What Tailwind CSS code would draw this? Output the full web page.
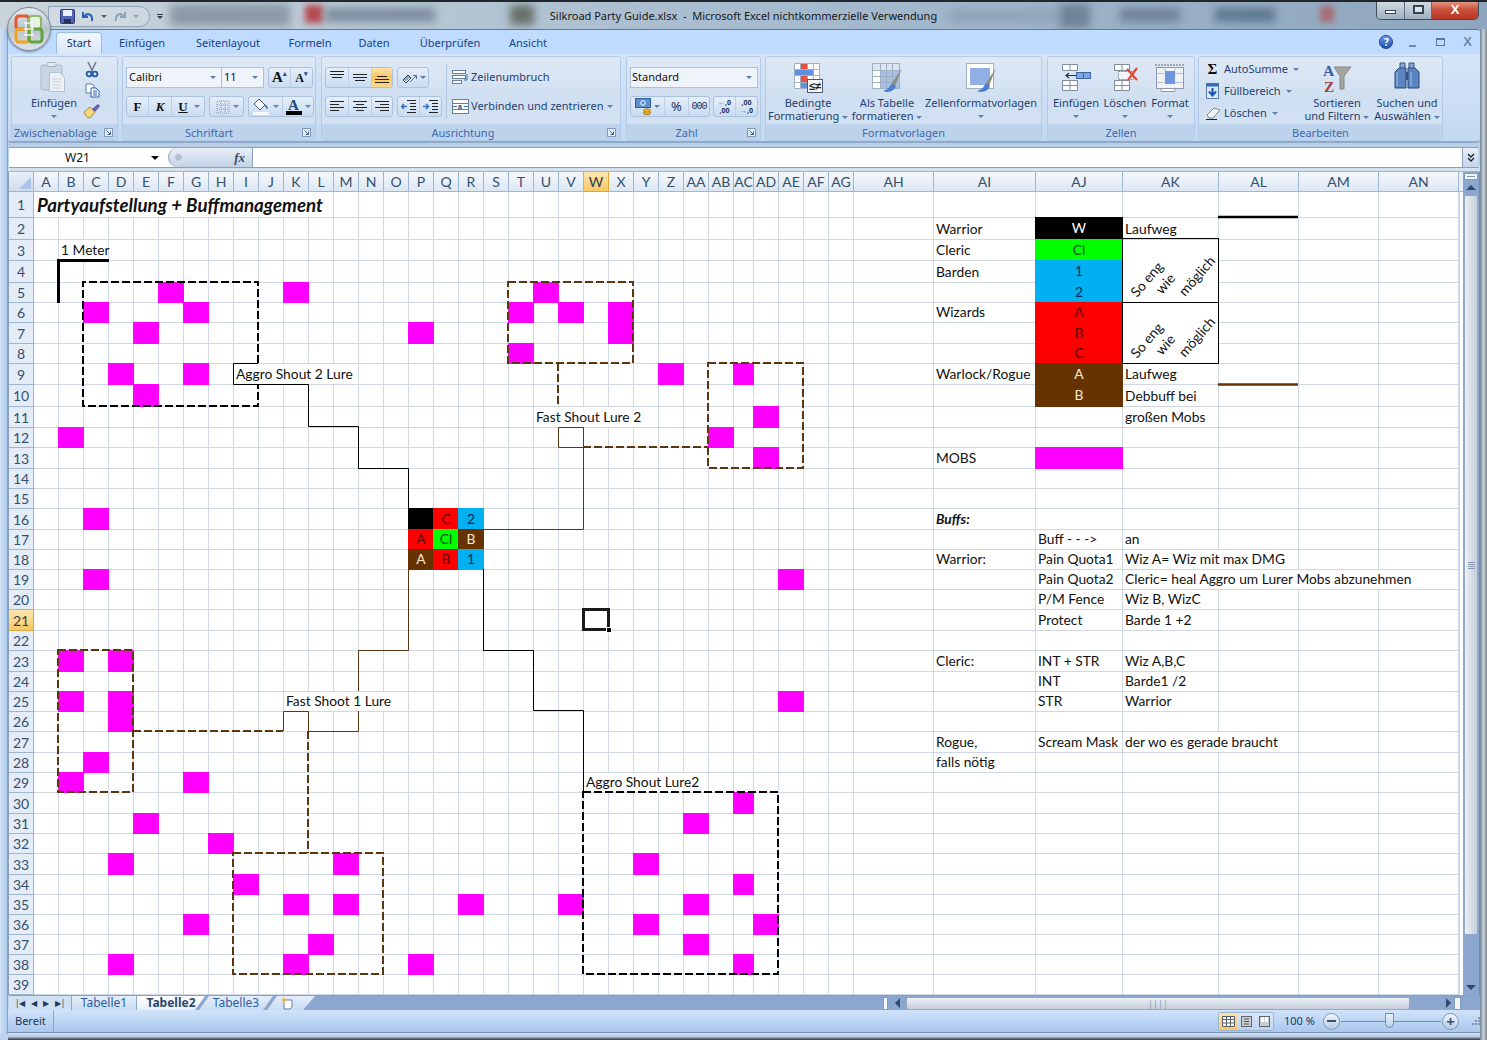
<!DOCTYPE html>
<html lang="de">
<head>
<meta charset="UTF-8">
<title>Silkroad Party Guide.xlsx - Microsoft Excel</title>
<script src="https://cdn.jsdelivr.net/npm/@tailwindcss/browser@4"></script>
</head>
<body class="w-[1487px] h-[1040px] overflow-hidden bg-[#bcd3ee] font-['Noto_Sans',sans-serif] text-[11px] text-[#1f3f70]">

<!-- title bar -->
<div class="relative h-[29px] overflow-hidden border-t-[2px] border-[#20262c] bg-gradient-to-r from-[#c8d3da] via-[#a7bccf] to-[#8ea6bd]">
  <div class="absolute left-[170px] top-[2px] w-[120px] h-[22px] bg-[#8c9aa8] blur-[4px]"></div>
  <div class="absolute left-[305px] top-[3px] w-[18px] h-[18px] bg-[#b84a52] blur-[3px]"></div>
  <div class="absolute left-[325px] top-[6px] w-[110px] h-[14px] bg-[#7d8d9e] blur-[4px]"></div>
  <div class="absolute left-[510px] top-[3px] w-[24px] h-[20px] bg-[#68716a] blur-[4px]"></div>
  <div class="absolute left-[950px] top-[8px] w-[110px] h-[12px] bg-[#8fa3b6] blur-[4px]"></div>
  <div class="absolute left-[1060px] top-[2px] w-[30px] h-[24px] bg-[#6f8397] blur-[4px]"></div>
  <div class="absolute left-[1120px] top-[6px] w-[60px] h-[14px] bg-[#71839a] blur-[4px]"></div>
  <div class="absolute left-[1215px] top-[6px] w-[60px] h-[14px] bg-[#5f7890] blur-[4px]"></div>
  <div class="absolute left-[1320px] top-[4px] w-[14px] h-[16px] bg-[#a56a72] blur-[3px]"></div>
  <div class="relative flex h-full items-center justify-center text-[11px] text-[#14181d] pt-[1px]">Silkroad Party Guide.xlsx&nbsp; -&nbsp; Microsoft Excel nichtkommerzielle Verwendung</div>
  <!-- quick access toolbar -->
  <div class="absolute left-[48px] top-[4px] h-[21px] w-[102px] rounded-r-full border border-[#8da3ba] bg-white/20 flex items-center pl-[11px] gap-[6px]">
    <svg width="15" height="15" viewBox="0 0 15 15"><rect x="0.5" y="0.5" width="14" height="14" rx="1" fill="#5464b4" stroke="#2c3b78"/><rect x="3" y="1" width="9" height="6" fill="#e8edf8"/><rect x="4" y="10" width="7" height="4" fill="#20305f"/></svg>
    <svg width="14" height="14" viewBox="0 0 14 14"><path d="M2 2v5h5" fill="none" stroke="#2a64b8" stroke-width="2"/><path d="M3 7c3-5 9-3 8 4" fill="none" stroke="#2a64b8" stroke-width="2"/></svg>
    <span class="w-0 h-0 border-x-[3px] border-t-[3px] border-x-transparent border-t-[#51627a]"></span>
    <svg width="14" height="14" viewBox="0 0 14 14"><path d="M12 2v5H7" fill="none" stroke="#8fa3b7" stroke-width="2"/><path d="M11 7C8 2 2 4 3 11" fill="none" stroke="#8fa3b7" stroke-width="2"/></svg>
    <span class="w-0 h-0 border-x-[3px] border-t-[3px] border-x-transparent border-t-[#8fa3b7]"></span>
  </div>
  <div class="absolute left-[157px] top-[12px] flex flex-col items-center gap-[1px]"><span class="w-[6px] h-[1px] bg-[#2c3e55]"></span><span class="w-0 h-0 border-x-[3px] border-t-[3px] border-x-transparent border-t-[#2c3e55]"></span></div>
  <!-- window controls -->
  <div class="absolute right-[8px] top-[-2px] flex h-[20px] rounded-b-[5px] overflow-hidden border border-t-0 border-[#3f4c59]">
    <div class="w-[28px] flex items-center justify-center bg-gradient-to-b from-[#d7dee6] to-[#9fb0c2] border-r border-[#5c6b7b]"><span class="mt-[4px] w-[11px] h-[4px] border border-[#38434e] bg-white"></span></div>
    <div class="w-[27px] flex items-center justify-center bg-gradient-to-b from-[#d7dee6] to-[#9fb0c2] border-r border-[#5c6b7b]"><span class="w-[11px] h-[9px] border-[2px] border-[#38434e] bg-white/50"></span></div>
    <div class="w-[46px] flex items-center justify-center bg-gradient-to-b from-[#e9a493] via-[#c9503c] to-[#b93423] text-white text-[13px] font-bold font-['Liberation_Sans',sans-serif]">X</div>
  </div>
</div>

<!-- office button -->
<div class="absolute left-[7px] top-[7px] z-10 w-[44px] h-[44px] rounded-full bg-gradient-to-b from-[#e6ebef] via-[#b8c3cc] to-[#dde4ea] border border-[#7d8b99] flex items-center justify-center shadow-[0_1px_2px_#0006]">
  <svg width="30" height="30" viewBox="0 0 30 30">
    <rect x="2" y="2" width="13" height="13" rx="3" fill="none" stroke="#e3572b" stroke-width="3"/>
    <rect x="15" y="2" width="12" height="13" rx="3" fill="#e8f3df" stroke="#8db86a" stroke-width="2"/>
    <rect x="2" y="15" width="13" height="13" rx="3" fill="none" stroke="#f0a41f" stroke-width="3"/>
    <rect x="15" y="15" width="13" height="13" rx="3" fill="none" stroke="#5fa33a" stroke-width="3"/>
    <path d="M10 9h10M10 15h10M10 21h10M12 8v14M18 8v14" stroke="#eef3f7" stroke-width="1.4"/>
  </svg>
</div>

<div class="flex h-[1011px]">
  <!-- left frame -->
  <div class="w-[8px] bg-gradient-to-r from-[#d3e2f4] to-[#a9c8ec] border-r border-[#86a5cc] h-[1005px]"></div>

  <div class="w-[1472px] flex flex-col">
    <!-- tabs -->
    <div class="h-[25px] bg-[#bfdbff] border-t border-[#5d7b9e] flex items-end pl-[48px] text-[11px] text-[#15428b] rounded-t-[3px]">
      <div class="w-[46px] h-[22px] flex items-center justify-center rounded-t-[4px] border border-b-0 border-[#9dbde4] bg-gradient-to-b from-[#f0f6fd] to-[#d9e7f7] text-[#13315c]">Start</div>
      <div class="w-[80px] h-[22px] flex items-center justify-center">Einfügen</div>
      <div class="w-[92px] h-[22px] flex items-center justify-center">Seitenlayout</div>
      <div class="w-[72px] h-[22px] flex items-center justify-center">Formeln</div>
      <div class="w-[56px] h-[22px] flex items-center justify-center">Daten</div>
      <div class="w-[96px] h-[22px] flex items-center justify-center">Überprüfen</div>
      <div class="w-[60px] h-[22px] flex items-center justify-center">Ansicht</div>
      <div class="ml-auto mr-[8px] h-[24px] flex items-center gap-[12px]">
        <span class="w-[14px] h-[14px] rounded-full bg-gradient-to-b from-[#6f9fe6] to-[#1c4fb0] border border-[#1c3f8a] text-white text-[10px] font-bold flex items-center justify-center">?</span>
        <span class="mt-[8px] w-[7px] h-[2px] bg-[#6d87a8] ml-[4px]"></span>
        <span class="w-[9px] h-[8px] border border-t-[2px] border-[#5b7698] ml-[8px]"></span>
        <span class="text-[#6d87a8] text-[13px] font-bold font-['Liberation_Sans',sans-serif] ml-[6px]">X</span>
      </div>
    </div>

    <!-- ribbon -->
    <div class="h-[89px] bg-gradient-to-b from-[#d5e5f7] to-[#c3d9f2] border-b-[2px] border-[#8fa9c8] flex gap-[4px] pl-[3px] pt-[2px] rounded-b-[3px]">

      <!-- Zwischenablage -->
      <section class="w-[107px] h-[85px] flex flex-col rounded-[3px] border border-[#b3cbe6] bg-gradient-to-b from-[#dfe9f6] via-[#cfdff1] to-[#d4e3f3] overflow-hidden">
        <div class="h-[68px] flex">
          <div class="w-[70px] pl-[14px] flex flex-col items-center pt-[4px]">
            <svg width="28" height="32" viewBox="0 0 28 32" class="h-[32px]">
              <rect x="1" y="4" width="21" height="25" rx="2" fill="#c9d5e2" stroke="#aab8c8"/>
              <rect x="7" y="1.5" width="9" height="4" rx="1" fill="#e4eaf1" stroke="#a3b2c3"/>
              <path d="M9.5 11.5h10l5 5v14h-15z" fill="#eef2f7" stroke="#b3bfcc"/>
              <path d="M12 18h9M12 21h9M12 24h9M12 27h9" stroke="#c6d0da"/>
            </svg>
            <div class="mt-[3px] leading-[13px] text-[#1f3f70]">Einfügen</div>
            <span class="mt-[6px] w-0 h-0 border-x-[3px] border-t-[3px] border-x-transparent border-t-[#5f7ea8]"></span>
          </div>
          <div class="w-[20px] flex flex-col items-center pt-[4px] gap-[5px]">
            <svg width="14" height="17" viewBox="0 0 14 17"><path d="M3 1l5 10M11 1L6 11" stroke="#737f8d" stroke-width="1.6"/><circle cx="4" cy="13" r="2.4" fill="none" stroke="#2b5aa6" stroke-width="1.9"/><circle cx="10" cy="13" r="2.4" fill="none" stroke="#2b5aa6" stroke-width="1.9"/></svg>
            <svg width="15" height="15" viewBox="0 0 15 15"><path d="M1 1h6l2 2v7H1z" fill="#fff" stroke="#5a78a5"/><path d="M6 5h5l3 3v6H6z" fill="#fff" stroke="#2f5ea8"/><path d="M8 8h4M8 10h4M8 12h4" stroke="#2f5ea8"/></svg>
            <svg width="18" height="16" viewBox="0 0 18 16"><path d="M1 9l6-5 5 5-5 6C4 15 2 12 1 9z" fill="#f1d67a" stroke="#a98a3b"/><path d="M9 6l6-5 2 2-5 6z" fill="#6c5ba8"/></svg>
          </div>
        </div>
        <div class="h-[16px] bg-[#bdd3ec] text-[#3e6aaa] flex items-center pl-[2px] leading-none relative">Zwischenablage
          <svg class="absolute right-[4px] top-[4px]" width="9" height="9" viewBox="0 0 9 9" fill="none"><path d="M.5 8.5v-8h8v8z" fill="#e3edf8" stroke="#7f99ba"/><path d="M2.5 2.5l4 4M6.5 3.5v3h-3" stroke="#46658f"/></svg></div>
      </section>

      <!-- Schriftart -->
      <section class="w-[194px] h-[85px] flex flex-col rounded-[3px] border border-[#b3cbe6] bg-gradient-to-b from-[#dfe9f6] via-[#cfdff1] to-[#d4e3f3] overflow-hidden">
        <div class="h-[68px] pl-[3px] pt-[10px] flex flex-col gap-[8px]">
          <div class="flex h-[21px]">
            <div class="w-[96px] border border-[#abc1de] bg-[#eff4fb] flex items-center justify-between pl-[2px] pr-[5px] text-[#111]">Calibri<span class="w-0 h-0 border-x-[3px] border-t-[3px] border-x-transparent border-t-[#5f7ea8]"></span></div>
            <div class="w-[42px] border border-l-0 border-[#abc1de] bg-[#eff4fb] flex items-center justify-between pl-[2px] pr-[5px] text-[#111]">11<span class="w-0 h-0 border-x-[3px] border-t-[3px] border-x-transparent border-t-[#5f7ea8]"></span></div>
            <div class="ml-[4px] w-[45px] flex rounded-[3px] border border-[#abc1de] bg-gradient-to-b from-[#e5eef9] to-[#c9dcf1] font-['Liberation_Serif',serif] font-bold text-[#111]">
              <span class="flex-1 flex items-center justify-center text-[15px] border-r border-[#bdd0e7]">A<sup class="text-[#254f90] text-[7px]">▴</sup></span>
              <span class="flex-1 flex items-center justify-center text-[12px]">A<sup class="text-[#254f90] text-[7px]">▾</sup></span>
            </div>
          </div>
          <div class="flex h-[21px]">
            <div class="w-[79px] flex rounded-[3px] border border-[#abc1de] bg-gradient-to-b from-[#e5eef9] to-[#c9dcf1] font-['Liberation_Serif',serif] text-[13px] font-bold text-[#111]">
              <span class="w-[22px] flex items-center justify-center border-r border-[#bdd0e7]">F</span>
              <span class="w-[23px] flex items-center justify-center border-r border-[#bdd0e7] italic">K</span>
              <span class="w-[22px] flex items-center justify-center underline">U</span>
              <span class="flex-1 flex items-center"><span class="w-0 h-0 border-x-[3px] border-t-[3px] border-x-transparent border-t-[#5f7ea8]"></span></span>
            </div>
            <div class="ml-[4px] w-[35px] flex items-center justify-between pl-[6px] pr-[4px] rounded-[3px] border border-[#abc1de] bg-gradient-to-b from-[#e5eef9] to-[#c9dcf1]">
              <svg width="14" height="14" viewBox="0 0 14 14"><path d="M1 1h12v12H1zM5 1v12M9 1v12M1 5h12M1 9h12" fill="none" stroke="#8d9cb0" stroke-dasharray="1 1"/></svg>
              <span class="w-0 h-0 border-x-[3px] border-t-[3px] border-x-transparent border-t-[#5f7ea8]"></span>
            </div>
            <div class="ml-[4px] w-[66px] flex rounded-[3px] border border-[#abc1de] bg-gradient-to-b from-[#e5eef9] to-[#c9dcf1]">
              <span class="w-[34px] flex items-center justify-center gap-[3px] border-r border-[#bdd0e7]">
                <svg width="17" height="17" viewBox="0 0 17 17"><path d="M6 1l6 6-5 5-6-6z" fill="#f4f6f9" stroke="#555"/><path d="M11 6c3 1 4 3 4 5l-2-1z" fill="#2e6fc0"/><rect x="0" y="14" width="16" height="3" fill="#f7f8fa"/></svg>
                <span class="w-0 h-0 border-x-[3px] border-t-[3px] border-x-transparent border-t-[#5f7ea8]"></span>
              </span>
              <span class="flex-1 flex items-center justify-center gap-[3px]">
                <span class="flex flex-col items-center leading-[12px] font-['Liberation_Serif',serif] font-bold text-[15px] text-[#23497f]">A<span class="block w-[16px] h-[4px] bg-black"></span></span>
                <span class="w-0 h-0 border-x-[3px] border-t-[3px] border-x-transparent border-t-[#5f7ea8]"></span>
              </span>
            </div>
          </div>
        </div>
        <div class="h-[16px] bg-[#bdd3ec] text-[#3e6aaa] flex items-center justify-center leading-none relative pr-[20px]">Schriftart
          <svg class="absolute right-[4px] top-[4px]" width="9" height="9" viewBox="0 0 9 9" fill="none"><path d="M.5 8.5v-8h8v8z" fill="#e3edf8" stroke="#7f99ba"/><path d="M2.5 2.5l4 4M6.5 3.5v3h-3" stroke="#46658f"/></svg></div>
      </section>

      <!-- Ausrichtung -->
      <section class="ml-[1px] w-[300px] h-[85px] flex flex-col rounded-[3px] border border-[#b3cbe6] bg-gradient-to-b from-[#dfe9f6] via-[#cfdff1] to-[#d4e3f3] overflow-hidden">
        <div class="h-[68px] pl-[3px] pt-[10px] flex">
          <div class="flex flex-col gap-[8px]">
            <div class="flex h-[21px] gap-[4px]">
              <div class="w-[68px] flex rounded-[3px] border border-[#abc1de] bg-gradient-to-b from-[#e5eef9] to-[#c9dcf1] overflow-hidden">
                <span class="w-[23px] flex justify-center pt-[3px] border-r border-[#bdd0e7]"><svg width="14" height="8" viewBox="0 0 14 8"><path d="M0 .5h14M0 3.5h14M2 6.5h10" stroke="#222"/></svg></span>
                <span class="w-[23px] flex items-center justify-center border-r border-[#bdd0e7]"><svg width="14" height="8" viewBox="0 0 14 8"><path d="M0 .5h14M0 3.5h14M2 6.5h10" stroke="#222"/></svg></span>
                <span class="flex-1 flex items-end justify-center pb-[3px] bg-gradient-to-b from-[#fde3a8] via-[#fbc45f] to-[#fbd98b]"><svg width="14" height="8" viewBox="0 0 14 8"><path d="M2 .5h10M0 3.5h14M0 6.5h14" stroke="#222"/></svg></span>
              </div>
              <div class="w-[32px] flex items-center justify-center gap-[2px] rounded-[3px] border border-[#abc1de] bg-gradient-to-b from-[#e5eef9] to-[#c9dcf1]">
                <svg width="17" height="15" viewBox="0 0 17 15"><path d="M2 10l5-5 3 3-5 5zM3.5 10l4-4M4.5 11l4-4" fill="#fff" stroke="#34465e"/><path d="M9 12l6-6M12 5.5h3.5V9" fill="none" stroke="#5a6f8c"/></svg>
                <span class="w-0 h-0 border-x-[3px] border-t-[3px] border-x-transparent border-t-[#5f7ea8]"></span>
              </div>
            </div>
            <div class="flex h-[21px] gap-[4px]">
              <div class="w-[68px] flex rounded-[3px] border border-[#abc1de] bg-gradient-to-b from-[#e5eef9] to-[#c9dcf1]">
                <span class="w-[23px] flex items-center justify-center border-r border-[#bdd0e7]"><svg width="14" height="11" viewBox="0 0 14 11"><path d="M0 .5h14M0 3.5h9M0 6.5h14M0 9.5h9" stroke="#222"/></svg></span>
                <span class="w-[23px] flex items-center justify-center border-r border-[#bdd0e7]"><svg width="14" height="11" viewBox="0 0 14 11"><path d="M0 .5h14M3 3.5h8M0 6.5h14M3 9.5h8" stroke="#222"/></svg></span>
                <span class="flex-1 flex items-center justify-center"><svg width="14" height="11" viewBox="0 0 14 11"><path d="M0 .5h14M5 3.5h9M0 6.5h14M5 9.5h9" stroke="#222"/></svg></span>
              </div>
              <div class="w-[45px] flex rounded-[3px] border border-[#abc1de] bg-gradient-to-b from-[#e5eef9] to-[#c9dcf1]">
                <span class="flex-1 flex items-center justify-center border-r border-[#bdd0e7]"><svg width="15" height="13" viewBox="0 0 15 13"><path d="M6 .5h9M9 3.5h6M9 6.5h6M9 9.5h6M6 12.5h9" stroke="#222"/><path d="M6 6.5H1M3 4L.5 6.5 3 9" fill="none" stroke="#2e6fc0" stroke-width="1.4"/></svg></span>
                <span class="flex-1 flex items-center justify-center"><svg width="15" height="13" viewBox="0 0 15 13"><path d="M6 .5h9M9 3.5h6M9 6.5h6M9 9.5h6M6 12.5h9" stroke="#222"/><path d="M0 6.5h5M3 4l2.5 2.5L3 9" fill="none" stroke="#2e6fc0" stroke-width="1.4"/></svg></span>
              </div>
            </div>
          </div>
          <div class="ml-[4px] mt-[-3px] w-px h-[55px] bg-[#b3c6dd]"></div>
          <div class="ml-[5px] flex flex-col gap-[8px] text-[#1f3f70] whitespace-nowrap">
            <div class="h-[21px] flex items-center gap-[2px]">
              <svg width="17" height="15" viewBox="0 0 17 15"><rect x="0.5" y="0.5" width="13" height="3" fill="#fff" stroke="#6d7f96"/><rect x="0.5" y="5.5" width="13" height="3" fill="#fff" stroke="#6d7f96"/><rect x="0.5" y="10.5" width="9" height="3" fill="#fff" stroke="#6d7f96"/><path d="M15 4v6h-3" fill="none" stroke="#2e6fc0"/></svg>
              Zeilenumbruch
            </div>
            <div class="h-[21px] flex items-center gap-[2px]">
              <svg width="17" height="15" viewBox="0 0 17 15"><rect x="0.5" y="0.5" width="16" height="14" fill="#fff" stroke="#6d7f96"/><path d="M0 4.5h17M0 10.5h17" stroke="#6d7f96"/><text x="6" y="10" font-size="7" font-family="Liberation Sans" font-weight="bold" fill="#20497f">a</text><path d="M1 7.5h4M12 7.5h4" stroke="#2e6fc0"/></svg>
              Verbinden und zentrieren <span class="ml-[2px] w-0 h-0 border-x-[3px] border-t-[3px] border-x-transparent border-t-[#5f7ea8]"></span>
            </div>
          </div>
        </div>
        <div class="h-[16px] bg-[#bdd3ec] text-[#3e6aaa] flex items-center justify-center leading-none relative pr-[16px]">Ausrichtung
          <svg class="absolute right-[4px] top-[4px]" width="9" height="9" viewBox="0 0 9 9" fill="none"><path d="M.5 8.5v-8h8v8z" fill="#e3edf8" stroke="#7f99ba"/><path d="M2.5 2.5l4 4M6.5 3.5v3h-3" stroke="#46658f"/></svg></div>
      </section>

      <!-- Zahl -->
      <section class="ml-[1px] w-[135px] h-[85px] flex flex-col rounded-[3px] border border-[#b3cbe6] bg-gradient-to-b from-[#dfe9f6] via-[#cfdff1] to-[#d4e3f3] overflow-hidden">
        <div class="h-[68px] pl-[3px] pt-[10px] flex flex-col gap-[8px]">
          <div class="w-[128px] h-[21px] border border-[#abc1de] bg-[#eff4fb] flex items-center justify-between pl-[1px] pr-[5px] text-[#111]">Standard<span class="w-0 h-0 border-x-[3px] border-t-[3px] border-x-transparent border-t-[#5f7ea8]"></span></div>
          <div class="flex h-[21px] gap-[3px]">
            <div class="w-[80px] flex rounded-[3px] border border-[#abc1de] bg-gradient-to-b from-[#e5eef9] to-[#c9dcf1] text-[#1b3560]">
              <span class="w-[34px] flex items-center justify-center gap-[2px] border-r border-[#bdd0e7]">
                <svg width="17" height="17" viewBox="0 0 17 17"><rect x="0.5" y="0.5" width="15" height="9" fill="#5f8fd0" stroke="#2f5ea8"/><circle cx="8" cy="5" r="2.3" fill="none" stroke="#fff"/><ellipse cx="12" cy="15" rx="3.5" ry="1.6" fill="#f0b93a" stroke="#a57912"/><ellipse cx="12" cy="12.5" rx="3.5" ry="1.6" fill="#f0b93a" stroke="#a57912"/></svg>
                <span class="w-0 h-0 border-x-[3px] border-t-[3px] border-x-transparent border-t-[#5f7ea8]"></span>
              </span>
              <span class="w-[24px] flex items-center justify-center border-r border-[#bdd0e7] text-[13px]">%</span>
              <span class="flex-1 flex items-center justify-center font-['Liberation_Mono',monospace] text-[10px] tracking-[-1px]">000</span>
            </div>
            <div class="w-[45px] flex rounded-[3px] border border-[#abc1de] bg-gradient-to-b from-[#e5eef9] to-[#c9dcf1] text-[#1b3560] text-[7px] font-bold leading-[8px]">
              <span class="flex-1 flex flex-col items-center justify-center border-r border-[#bdd0e7] overflow-hidden"><span><span class="text-[#2e6fc0]">←</span>,0</span><span>,00</span></span>
              <span class="flex-1 flex flex-col items-center justify-center overflow-hidden"><span>,00</span><span><span class="text-[#2e6fc0]">→</span>,0</span></span>
            </div>
          </div>
        </div>
        <div class="h-[16px] bg-[#bdd3ec] text-[#3e6aaa] flex items-center justify-center leading-none relative pr-[14px]">Zahl
          <svg class="absolute right-[4px] top-[4px]" width="9" height="9" viewBox="0 0 9 9" fill="none"><path d="M.5 8.5v-8h8v8z" fill="#e3edf8" stroke="#7f99ba"/><path d="M2.5 2.5l4 4M6.5 3.5v3h-3" stroke="#46658f"/></svg></div>
      </section>

      <!-- Formatvorlagen -->
      <section class="w-[277px] h-[85px] flex flex-col rounded-[3px] border border-[#b3cbe6] bg-gradient-to-b from-[#dfe9f6] via-[#cfdff1] to-[#d4e3f3] overflow-hidden">
        <div class="h-[68px] flex pl-[2px]">
          <div class="w-[80px] flex flex-col items-center pt-[5px]">
            <svg width="30" height="32" viewBox="0 0 30 32" class="h-[32px]">
              <path d="M1.5 1.5h25v25h-25zM7.5 1.5v25M14.5 1.5v25M20.5 1.5v25M1.5 7.5h25M1.5 13.5h25M1.5 20.5h25" fill="#fff" stroke="#9fb0c2"/>
              <rect x="8" y="2" width="6" height="5" fill="#e84f3f"/><rect x="2" y="8" width="18" height="5" fill="#5f8fe0"/><rect x="8" y="14" width="6" height="6" fill="#e84f3f"/><rect x="8" y="21" width="6" height="5" fill="#5f8fe0"/>
              <rect x="14.5" y="17.5" width="15" height="13" fill="#f3f5f8" stroke="#4c5b6e"/><text x="16" y="28" font-size="11" font-weight="bold" font-family="Liberation Sans" fill="#222">≤≠</text>
            </svg>
            <div class="mt-[2px] leading-[13px] text-center whitespace-nowrap">Bedingte<br>Formatierung <span class="inline-block align-middle w-0 h-0 border-x-[3px] border-t-[3px] border-x-transparent border-t-[#5f7ea8]"></span></div>
          </div>
          <div class="w-[78px] flex flex-col items-center pt-[5px]">
            <svg width="32" height="32" viewBox="0 0 32 32" class="h-[32px]">
              <path d="M1.5 1.5h27v25h-27z" fill="#fff" stroke="#9fb0c2"/><rect x="2" y="2" width="26" height="6" fill="#dbe5f5"/><rect x="10" y="9" width="18" height="17" fill="#a7bfe9"/>
              <path d="M1.5 8.5h27M1.5 14.5h27M1.5 20.5h27M9.5 1.5v25M15.5 1.5v25M21.5 1.5v25" stroke="#9fb0c2"/>
              <path d="M31 6L21 21l3 3z" fill="#8f8d7c"/><path d="M21 21c-2 3-3 6-9 8 4 2 11 1 13-5z" fill="#4d7fd0"/>
            </svg>
            <div class="mt-[2px] leading-[13px] text-center whitespace-nowrap">Als Tabelle<br>formatieren <span class="inline-block align-middle w-0 h-0 border-x-[3px] border-t-[3px] border-x-transparent border-t-[#5f7ea8]"></span></div>
          </div>
          <div class="w-[110px] flex flex-col items-center pt-[5px]">
            <svg width="32" height="32" viewBox="0 0 32 32" class="h-[32px]">
              <rect x="1.5" y="1.5" width="27" height="25" fill="#fff" stroke="#9fb0c2"/><rect x="5" y="6" width="20" height="17" fill="#92b0e6"/>
              <path d="M31 6L21 21l3 3z" fill="#8f8d7c"/><path d="M21 21c-2 3-3 6-9 8 4 2 11 1 13-5z" fill="#4d7fd0"/>
            </svg>
            <div class="mt-[2px] leading-[13px] text-center whitespace-nowrap">Zellenformatvorlagen</div>
            <span class="mt-[6px] w-0 h-0 border-x-[3px] border-t-[3px] border-x-transparent border-t-[#5f7ea8]"></span>
          </div>
        </div>
        <div class="h-[16px] bg-[#bdd3ec] text-[#3e6aaa] flex items-center justify-center leading-none">Formatvorlagen</div>
      </section>

      <!-- Zellen -->
      <section class="ml-[1px] w-[148px] h-[85px] flex flex-col rounded-[3px] border border-[#b3cbe6] bg-gradient-to-b from-[#dfe9f6] via-[#cfdff1] to-[#d4e3f3] overflow-hidden">
        <div class="h-[68px] flex pl-[2px]">
          <div class="w-[52px] flex flex-col items-center pt-[5px]">
            <svg width="32" height="32" viewBox="0 0 32 32" class="h-[32px]">
              <path d="M2.5 2.5h15v6h-15zM10 2.5v6M2.5 18.5h15v10h-15zM10 18.5v10M2.5 23.5h15" fill="#fff" stroke="#7f8d9e"/>
              <rect x="16.5" y="10.5" width="14" height="6" fill="#7ea4e2" stroke="#3f65a8"/><path d="M23.5 10.5v6" stroke="#3f65a8"/>
              <path d="M16 13.5H6M9 11l-3 2.5L9 16" fill="none" stroke="#27303b" stroke-width="1.2"/>
            </svg>
            <div class="mt-[2px] leading-[13px] whitespace-nowrap">Einfügen</div>
            <span class="mt-[6px] w-0 h-0 border-x-[3px] border-t-[3px] border-x-transparent border-t-[#5f7ea8]"></span>
          </div>
          <div class="w-[46px] flex flex-col items-center pt-[5px]">
            <svg width="32" height="32" viewBox="0 0 32 32" class="h-[32px]">
              <path d="M5.5 2.5h15v6h-15zM13 2.5v6M5.5 18.5h15v10h-15zM13 18.5v10M5.5 23.5h15" fill="#fff" stroke="#7f8d9e"/>
              <path d="M9.5 9.5h15v8h-15z" fill="#f4f6f9" stroke="#7f8d9e" stroke-dasharray="2 1"/>
              <path d="M18 7l10 11M28 6L19 18" stroke="#e04a33" stroke-width="2.2"/>
            </svg>
            <div class="mt-[2px] leading-[13px] whitespace-nowrap">Löschen</div>
            <span class="mt-[6px] w-0 h-0 border-x-[3px] border-t-[3px] border-x-transparent border-t-[#5f7ea8]"></span>
          </div>
          <div class="w-[44px] flex flex-col items-center pt-[5px]">
            <svg width="32" height="32" viewBox="0 0 32 32" class="h-[32px]">
              <path d="M1 3h30" stroke="#667" stroke-dasharray="2 1"/>
              <rect x="2.5" y="5.5" width="27" height="21" fill="#eef2f7" stroke="#8d9aab"/><rect x="11" y="9" width="10" height="13" fill="#6f97e0"/>
              <path d="M2.5 11.5h8M21 11.5h8M2.5 20.5h8M21 20.5h8M11 5.5v4M21 5.5v4" stroke="#b6c1cd"/>
              <path d="M7 26.5h14v3H7z" fill="#fff" stroke="#8d9aab"/>
            </svg>
            <div class="mt-[2px] leading-[13px] whitespace-nowrap">Format</div>
            <span class="mt-[6px] w-0 h-0 border-x-[3px] border-t-[3px] border-x-transparent border-t-[#5f7ea8]"></span>
          </div>
        </div>
        <div class="h-[16px] bg-[#bdd3ec] text-[#3e6aaa] flex items-center justify-center leading-none">Zellen</div>
      </section>

      <!-- Bearbeiten -->
      <section class="ml-[-1px] w-[245px] h-[85px] flex flex-col rounded-[3px] border border-[#b3cbe6] bg-gradient-to-b from-[#dfe9f6] via-[#cfdff1] to-[#d4e3f3] overflow-hidden">
        <div class="h-[68px] flex">
          <div class="w-[103px] pl-[7px] pt-[1px] flex flex-col whitespace-nowrap">
            <div class="h-[22px] flex items-center gap-[5px]"><span class="w-[13px] text-center text-[#111] text-[15px] font-bold font-['Liberation_Serif',serif]">Σ</span>AutoSumme <span class="w-0 h-0 border-x-[3px] border-t-[3px] border-x-transparent border-t-[#5f7ea8]"></span></div>
            <div class="h-[22px] flex items-center gap-[5px]"><svg width="13" height="16" viewBox="0 0 13 16"><rect x="0.5" y="0.5" width="12" height="15" fill="#d9e6f7" stroke="#5f7ea8"/><rect x="0.5" y="0.5" width="12" height="3" fill="#2e6fc0"/><path d="M6.5 5v6M3 8.5l3.5 4 3.5-4" fill="none" stroke="#1c55ae" stroke-width="2"/></svg>Füllbereich <span class="w-0 h-0 border-x-[3px] border-t-[3px] border-x-transparent border-t-[#5f7ea8]"></span></div>
            <div class="h-[22px] flex items-center gap-[2px]"><svg width="16" height="13" viewBox="0 0 16 13"><path d="M1 8l7-7 6 2-7 8H3z" fill="#f4f5f7" stroke="#7b8794"/><path d="M0 12.5h11" stroke="#222"/></svg>Löschen <span class="ml-[3px] w-0 h-0 border-x-[3px] border-t-[3px] border-x-transparent border-t-[#5f7ea8]"></span></div>
          </div>
          <div class="w-[70px] flex flex-col items-center pt-[3px]">
            <svg width="32" height="36" viewBox="0 0 32 36" class="h-[36px]">
              <text x="2" y="15.5" font-size="15.5" font-weight="bold" font-family="Liberation Serif" fill="#2e5fa8">A</text>
              <text x="3" y="32" font-size="15.5" font-weight="bold" font-family="Liberation Serif" fill="#a2423f">Z</text>
              <path d="M13 7h17l-7 9v13h-4V16z" fill="#a3a89f" stroke="#868b83"/>
            </svg>
            <div class="leading-[13px] text-center whitespace-nowrap">Sortieren<br>und Filtern <span class="inline-block align-middle w-0 h-0 border-x-[3px] border-t-[3px] border-x-transparent border-t-[#5f7ea8]"></span></div>
          </div>
          <div class="w-[70px] flex flex-col items-center pt-[3px]">
            <svg width="30" height="34" viewBox="0 0 30 34" class="h-[34px]">
              <path d="M8 3h5v7H8zM17 3h5v7h-5z" fill="#8ba6d0" stroke="#34537f"/>
              <path d="M3 12l4-4h7v20H3zM16 8h7l4 4v16H16z" fill="#5b84c2" stroke="#2b4a79"/>
              <path d="M14 12h2v8h-2z" fill="#34537f"/><path d="M5 12v14M19 12v14" stroke="#a9c2e6"/>
            </svg>
            <div class="mt-[2px] leading-[13px] text-center whitespace-nowrap">Suchen und<br>Auswählen <span class="inline-block align-middle w-0 h-0 border-x-[3px] border-t-[3px] border-x-transparent border-t-[#5f7ea8]"></span></div>
          </div>
        </div>
        <div class="h-[16px] bg-[#bdd3ec] text-[#3e6aaa] flex items-center justify-center leading-none">Bearbeiten</div>
      </section>
    </div>

    <!-- formula bar -->
    <div class="h-[4px] bg-[#b8cde6]"></div>
    <div class="h-[21px] ml-[1px] mr-[2px] flex bg-white border-y border-[#8aa0b8]">
      <div class="w-[156px] flex items-center pl-[56px] pr-[6px] justify-between text-[12px] text-[#111]">W21<span class="w-0 h-0 border-x-[4px] border-t-[4px] border-x-transparent border-t-black"></span></div>
      <div class="ml-[3px] w-[84px] flex items-center justify-between rounded-l-full border border-y-0 border-r-0 border-[#8aa0b8] bg-gradient-to-b from-[#e9eff8] via-[#d5e1f0] to-[#c2d1e6] pl-[5px] pr-[7px]">
        <span class="w-[9px] h-[9px] rounded-full bg-[#b3bfcd] border border-[#dfe6ee]"></span>
        <span class="font-['Liberation_Serif',serif] italic font-bold text-[13px] text-[#3d4b5d]">fx</span>
      </div>
      <div class="flex-1 border-l border-[#8aa0b8]"></div>
      <div class="w-[16px] flex items-center justify-center border-l border-[#8aa0b8] bg-gradient-to-b from-[#e9eff8] to-[#c7d6ea]">
        <svg width="8" height="9" viewBox="0 0 8 9" fill="none" stroke="#1a2430" stroke-width="1.4"><path d="M1 1l3 3 3-3M1 5l3 3 3-3"/></svg>
      </div>
    </div>
    <div class="h-[4px] bg-[#d6e1ee] border-b border-[#9fb5cd]"></div>

    <!-- sheet + vertical scrollbar -->
    <div class="flex h-[823px]">
      <div class="w-[1px] bg-[#8aa0b8]"></div>
      <div id="sheet" class="relative w-[1454px] h-[823px] grid grid-cols-[25px_repeat(28,25px)_20px_repeat(4,25px)_80px_102px_87px_96px_80px_80px_80px_4px] grid-rows-[20px_26px_22px_21px_22px_20px_20px_21px_20px_21px_22px_21px_20px_21px_20px_20px_21px_20px_20px_20px_20px_21px_20px_21px_20px_20px_20px_21px_20px_20px_21px_20px_20px_21px_20px_20px_20px_20px_20px_20px] bg-white overflow-hidden font-[Lato,sans-serif] text-[13.8px] text-[#111]">
        <svg class="absolute inset-0 z-10 pointer-events-none" width="1454" height="823" viewBox="9 172 1454 823" fill="none">
          <!-- 1 Meter bracket -->
          <path d="M58.5 303V260.5H109" stroke="#000" stroke-width="3"/>
          <!-- mob groups -->
          <g stroke-width="2" stroke-dasharray="8 3">
            <path d="M258 363V282H83V406H258V384" stroke="#000"/>
            <rect x="508" y="282" width="125" height="81" stroke="#5a3710"/>
            <rect x="708" y="363" width="95" height="105" stroke="#5a3710"/>
            <rect x="58" y="650" width="75" height="142" stroke="#5a3710"/>
            <rect x="233" y="853" width="150" height="121" stroke="#5a3710"/>
            <rect x="583" y="792" width="195" height="182" stroke="#000"/>
            <path d="M558 363V406M583 447H708M133 731H283M308 731V853" stroke="#5a3710"/>
          </g>
          <!-- lure paths -->
          <path d="M258 363.5H233.5V384.5H308.5V426.5H358.5V468.5H408.5V509" stroke="#000"/>
          <path d="M483.5 569V650.5H533.5V710.5H583.5V792" stroke="#000"/>
          <path d="M558.5 427.5H583.5V447.5H558.5ZM583.5 447.5V529.5H483" stroke="#5a3710"/>
          <path d="M283.5 731V711.5H308.5V731.5H358.5V711M358.5 691V650.5H408.5V569" stroke="#5a3710"/>
          <!-- legend borders -->
          <rect x="1122.5" y="238.5" width="96" height="64" stroke="#000"/>
          <rect x="1122.5" y="302.5" width="96" height="61" stroke="#000"/>
          <path d="M1218 217H1298" stroke="#000" stroke-width="2.5"/>
          <path d="M1218 384.5H1298" stroke="#663300" stroke-width="2.5"/>
          <!-- rotated legend text -->
          <g fill="#111" stroke="none" font-family="Lato" font-size="13.8">
            <text transform="translate(1137 298) rotate(-49)">So eng</text>
            <text transform="translate(1162 295) rotate(-49)">wie</text>
            <text transform="translate(1185 297) rotate(-49)">möglich</text>
            <text transform="translate(1137 359) rotate(-49)">So eng</text>
            <text transform="translate(1162 356) rotate(-49)">wie</text>
            <text transform="translate(1185 358) rotate(-49)">möglich</text>
          </g>
          <!-- active cell -->
          <rect x="583.5" y="609.5" width="25" height="20" stroke="#1a1a1a" stroke-width="3"/>
          <rect x="606.5" y="627.5" width="5" height="5" fill="#000" stroke="#fff"/>
        </svg>
      </div>
      <!-- vertical scrollbar -->
      <div class="w-[17px] h-[823px] flex flex-col bg-[#8ba7cf] border-r border-[#6f8bb2]">
        <div class="h-[7px] mx-[1px] mt-[1px] bg-[#f2f6fb] border border-[#7e9bc3] flex items-center justify-center"><span class="w-[8px] h-px bg-[#7e93ad]"></span></div>
        <div class="h-[15px] flex items-center justify-center"><span class="w-0 h-0 border-x-[5px] border-b-[5px] border-x-transparent border-b-[#2e4a70]"></span></div>
        <div class="h-[740px] mx-[1px] rounded-[2px] border border-[#95a9c4] bg-gradient-to-r from-[#eef1f6] to-[#c5cedb] flex items-center justify-center">
          <span class="flex flex-col gap-[1px]"><i class="block w-[7px] h-px bg-[#8a9ab0]"></i><i class="block w-[7px] h-px bg-[#8a9ab0]"></i><i class="block w-[7px] h-px bg-[#8a9ab0]"></i><i class="block w-[7px] h-px bg-[#8a9ab0]"></i></span>
        </div>
        <div class="flex-1"></div>
        <div class="h-[15px] flex items-center justify-center"><span class="w-0 h-0 border-x-[5px] border-t-[5px] border-x-transparent border-t-[#2e4a70]"></span></div>
      </div>
    </div>

    <!-- sheet tabs + horizontal scrollbar -->
    <div class="h-[15px] ml-[1px] flex bg-[#8ba7cf] border-t border-[#8aa0b8] text-[12px] leading-[14px]">
      <div class="w-[62px] flex items-center justify-around bg-[#cfe0f3] text-[#1e3a63] text-[8px] px-[3px]">
        <span>|◀</span><span>◀</span><span>▶</span><span>▶|</span>
      </div>
      <div class="w-[66px] text-center bg-gradient-to-b from-[#e4eefa] to-[#c9dcf1] border-x border-[#8fa9cb] text-[#2d5e9f]">Tabelle1</div>
      <div class="w-[68px] -mr-[6px] z-[1] text-center bg-gradient-to-b from-white to-[#e6eef8] font-bold text-[#28466e] [clip-path:polygon(0_0,100%_0,calc(100%-10px)_100%,0_100%)]">Tabelle2</div>
      <div class="w-[74px] -mr-[6px] text-center bg-gradient-to-b from-[#e4eefa] to-[#c9dcf1] text-[#2d5e9f] [clip-path:polygon(10px_0,100%_0,calc(100%-10px)_100%,0_100%)]">Tabelle3</div>
      <div class="w-[48px] pl-[14px] flex items-center bg-gradient-to-b from-[#e4eefa] to-[#c9dcf1] [clip-path:polygon(10px_0,100%_0,calc(100%-12px)_100%,0_100%)]">
        <svg width="13" height="13" viewBox="0 0 13 13"><path d="M3 3h8v7l-2 2H3z" fill="#fff" stroke="#5f7ea8"/><path d="M3 0l1 2 2 1-2 1-1 2-1-2-2-1 2-1z" fill="#f3b33a"/></svg>
      </div>
      <div class="flex-1"></div>
      <div class="w-[5px] h-[13px] my-px bg-[#f2f6fb] border border-[#7e9bc3]"></div>
      <div class="w-[18px] flex items-center justify-center"><span class="w-0 h-0 border-y-[5px] border-r-[5px] border-y-transparent border-r-[#2e4a70]"></span></div>
      <div class="w-[504px] h-[13px] my-px rounded-[2px] border border-[#95a9c4] bg-gradient-to-b from-[#eef1f6] to-[#c5cedb] flex items-center justify-center text-[#8a9ab0] text-[9px] leading-none">||||</div>
      <div class="w-[32px]"></div>
      <div class="w-[12px] flex items-center justify-center"><span class="w-0 h-0 border-y-[5px] border-l-[5px] border-y-transparent border-l-[#2e4a70]"></span></div>
      <div class="w-[7px] h-[13px] my-px bg-[#f2f6fb] border border-[#7e9bc3]"></div>
      <div class="w-[19px]"></div>
    </div>

    <!-- status bar -->
    <div class="h-[23px] flex items-center bg-gradient-to-b from-[#d0e3fa] via-[#bcd5f3] to-[#aac7ee] border-b border-[#7b94b3] text-[#1e395b]">
      <div class="w-[46px] h-full pl-[7px] flex items-center border-r border-[#8fa9cb]">Bereit</div>
      <div class="ml-auto flex items-center">
        <div class="w-[56px] h-[19px] flex rounded-[2px] border border-[#9cb6d6] bg-gradient-to-b from-[#dbe8f8] to-[#bcd3ef]">
          <span class="w-[18px] flex items-center justify-center bg-gradient-to-b from-[#fde3a8] to-[#fbc760]"><svg width="13" height="11" viewBox="0 0 13 11"><path d="M.5.5h12v10H.5zM4.5.5v10M8.5.5v10M.5 3.5h12M.5 7h12" fill="#fff" stroke="#55606c"/></svg></span>
          <span class="w-[19px] flex items-center justify-center"><svg width="11" height="11" viewBox="0 0 11 11"><rect x=".5" y=".5" width="10" height="10" fill="#c9ccd0" stroke="#5c6670"/><path d="M3 3h5M3 5.5h5M3 8h5" stroke="#555"/></svg></span>
          <span class="flex-1 flex items-center justify-center"><svg width="11" height="11" viewBox="0 0 11 11"><rect x=".5" y=".5" width="10" height="10" fill="#c9ccd0" stroke="#5c6670"/><path d="M2 1h3v5H2zM6 1h3v5H6z" fill="#fff"/></svg></span>
        </div>
        <span class="ml-[10px] w-[32px] text-[11px] text-[#1e395b] whitespace-nowrap">100 %</span>
        <span class="ml-[7px] w-[17px] h-[17px] rounded-full border border-[#7f98b8] bg-gradient-to-b from-[#f1f6fc] to-[#b6cbe6] flex items-center justify-center"><i class="block w-[9px] h-[2px] bg-[#3c5070]"></i></span>
        <div class="relative w-[100px] h-[1px] ml-[1px] bg-[#6f8db3]">
          <span class="absolute left-[44px] top-[-8px] w-[9px] h-[15px] rounded-b-[5px] border border-[#6f8db3] bg-gradient-to-b from-[#e8f0fa] to-[#bed2ea]"></span>
        </div>
        <span class="ml-[1px] w-[17px] h-[17px] rounded-full border border-[#7f98b8] bg-gradient-to-b from-[#f1f6fc] to-[#b6cbe6] flex items-center justify-center text-[15px] font-bold text-[#3c5070] leading-none">+</span>
        <svg class="ml-[11px]" width="10" height="11" viewBox="0 0 10 11" fill="#7f93ad"><rect x="8" y="1" width="2" height="2"/><rect x="5" y="4" width="2" height="2"/><rect x="8" y="4" width="2" height="2"/><rect x="2" y="7" width="2" height="2"/><rect x="5" y="7" width="2" height="2"/><rect x="8" y="7" width="2" height="2"/></svg>
      </div>
    </div>
    <div class="h-[7px] bg-gradient-to-b from-[#d6e3f2] via-[#b9cbe0] to-[#2f3a45]"></div>
  </div>

  <!-- right frame -->
  <div class="w-[7px] h-[1011px] bg-gradient-to-r from-[#6f8298] via-[#c9d0d7] to-[#7f8790]"></div>
</div>

<script>
  const cols = ['A','B','C','D','E','F','G','H','I','J','K','L','M','N','O','P','Q','R','S','T','U','V','W','X','Y','Z','AA','AB','AC','AD','AE','AF','AG','AH','AI','AJ','AK','AL','AM','AN'];
  const rowCount = 39;
  const sheet = document.getElementById('sheet');

  const MAGENTA = 'bg-[#ff00ff]', BLACK = 'bg-black text-white', GREEN = 'bg-[#00ff00] text-[#0a4a0a]',
        BLUE = 'bg-[#00b0f0] text-[#06264a]', RED = 'bg-[#ff0000] text-[#5e0000]', BROWN = 'bg-[#663300] text-[#f6ead8]';

  // cell fills, "ref" or "ref:text"
  const fills = [
    [MAGENTA, 'F5 K5 U5 C6 G6 T6 V6 X6 E7 P7 X7 T8 D9 G9 Z9 AC9 E10 AD11 B12 AB12 AD13 C16 C19 AE19 B23 D23 B25 D25 AE25 D26 C28 B29 G29 AC30 E31 AA31 H32 D33 M33 Y33 I34 AC34 K35 M35 R35 V35 AA35 G36 Y36 AD36 L37 AA37 D38 K38 P38 AC38 AJ13'],
    [BLACK, 'P16 AJ2:W'],
    [GREEN, 'Q17:Cl AJ3:Cl'],
    [BLUE, 'R16:2 R18:1 AJ4:1 AJ5:2'],
    [RED, 'Q16:C P17:A Q18:B AJ6:A AJ7:B AJ8:C'],
    [BROWN, 'R17:B P18:A AJ9:A AJ10:B'],
  ];

  // text cells: [ref, text, column span, extra classes]
  const texts = [
    ['A1', 'Partyaufstellung + Buffmanagement', 12, 'text-[18.7px] font-bold italic items-center pl-[3px] pt-[1px]'],
    ['B3', '1 Meter', 2],
    ['I9', 'Aggro Shout 2 Lure', 5],
    ['U11', 'Fast Shout Lure 2', 5],
    ['K25', 'Fast Shoot 1 Lure', 5],
    ['W29', 'Aggro Shout Lure2', 5],
    ['AI2', 'Warrior'], ['AI3', 'Cleric'], ['AI4', 'Barden'], ['AI6', 'Wizards'], ['AI9', 'Warlock/Rogue'], ['AI13', 'MOBS'],
    ['AK2', 'Laufweg'], ['AK9', 'Laufweg'], ['AK10', 'Debbuff bei'], ['AK11', 'großen Mobs'],
    ['AI16', 'Buffs:', 1, 'font-bold italic items-end pl-[2px] pb-[1px] leading-[19px]'],
    ['AJ17', 'Buff - - ->'], ['AK17', 'an'],
    ['AI18', 'Warrior:'], ['AJ18', 'Pain Quota1'], ['AK18', 'Wiz A= Wiz mit max DMG', 2],
    ['AJ19', 'Pain Quota2'], ['AK19', 'Cleric= heal Aggro um Lurer Mobs abzunehmen', 4],
    ['AJ20', 'P/M Fence'], ['AK20', 'Wiz B, WizC'],
    ['AJ21', 'Protect'], ['AK21', 'Barde 1 +2'],
    ['AI23', 'Cleric:'], ['AJ23', 'INT + STR'], ['AK23', 'Wiz A,B,C'],
    ['AJ24', 'INT'], ['AK24', 'Barde1 /2'],
    ['AJ25', 'STR'], ['AK25', 'Warrior'],
    ['AI27', 'Rogue,'], ['AJ27', 'Scream Mask'], ['AK27', 'der wo es gerade braucht', 2],
    ['AI28', 'falls nötig'],
  ];

  const parseRef = ref => {
    const m = ref.match(/^([A-Z]+)(\d+)$/);
    return [cols.indexOf(m[1]), +m[2] - 1];
  };

  const cells = {};
  fills.forEach(([cls, list]) => list.split(' ').forEach(item => {
    const [ref, text] = item.split(':');
    cells[ref] = { fill: cls, text: text || '' };
  }));
  texts.forEach(([ref, text, span, cls]) => { cells[ref] = { text, span, cls }; });

  function add(col, row, colSpan, rowSpan, className, text) {
    const el = document.createElement('div');
    el.className = className;
    el.style.gridColumn = (col + 1) + ' / span ' + colSpan;
    el.style.gridRow = (row + 1) + ' / span ' + rowSpan;
    if (text) el.textContent = text;
    sheet.insertBefore(el, sheet.lastElementChild);
  }

  // corner and headers
  add(0, 0, 1, 1, 'relative border-r border-b border-[#9eb6ce] bg-gradient-to-b from-[#e9f0f9] to-[#cfdcec] after:absolute after:right-[2px] after:bottom-[2px] after:border-l-[12px] after:border-b-[12px] after:border-l-transparent after:border-b-[#a9c4e9]');
  cols.forEach((name, c) => add(c + 1, 0, 1, 1,
    name === 'W'
      ? 'flex items-center justify-center border-r border-b border-[#d8a83f] bg-gradient-to-b from-[#fbe6ae] to-[#f8c863] text-[#2d3f55] text-[14px]'
      : 'flex items-center justify-center border-r border-b border-[#9eb6ce] bg-gradient-to-b from-[#f5f8fc] to-[#dce7f3] text-[#35506d] text-[14px]', name));
  add(41, 0, 1, 1, 'border-b border-[#9eb6ce] bg-[#e8eff7]');
  for (let r = 1; r <= rowCount; r++) {
    add(0, r, 1, 1, r === 21
      ? 'flex items-center justify-center border-r border-b border-[#d8a83f] bg-gradient-to-b from-[#fbe6ae] to-[#f8c863] text-[#2d3f55] text-[14px]'
      : 'flex items-center justify-center border-r border-b border-[#9eb6ce] bg-[#e4ecf7] text-[#35506d] text-[14px]', String(r));
  }

  // merged legend boxes
  const covered = new Set();
  const merged = { 'AK3': 3, 'AK6': 3 };
  Object.entries(merged).forEach(([ref, rows]) => {
    const [c, r] = parseRef(ref);
    for (let i = 1; i < rows; i++) covered.add(c + ':' + (r + i));
    add(c + 1, r + 1, 1, rows, 'bg-white');
    covered.add(c + ':' + r);
  });

  // body cells
  for (let r = 0; r < rowCount; r++) {
    for (let c = 0; c < cols.length; c++) {
      if (covered.has(c + ':' + r)) continue;
      const cell = cells[cols[c] + (r + 1)];
      if (!cell) {
        add(c + 1, r + 1, 1, 1, 'border-r border-b border-[#d0d7e5]');
      } else if (cell.fill) {
        add(c + 1, r + 1, 1, 1, 'flex items-center justify-center -ml-px -mt-px ' + cell.fill, cell.text);
      } else {
        const span = cell.span || 1;
        for (let i = 1; i < span; i++) covered.add((c + i) + ':' + r);
        add(c + 1, r + 1, span, 1, 'flex whitespace-nowrap border-r border-b border-[#d0d7e5] ' + (cell.cls || 'items-end pl-[2px] pb-[1px] leading-[19px]'), cell.text);
        c += span - 1;
      }
    }
  }
  add(41, 1, 1, 39, 'border-l border-[#d0d7e5]');
</script>
</body>
</html>
